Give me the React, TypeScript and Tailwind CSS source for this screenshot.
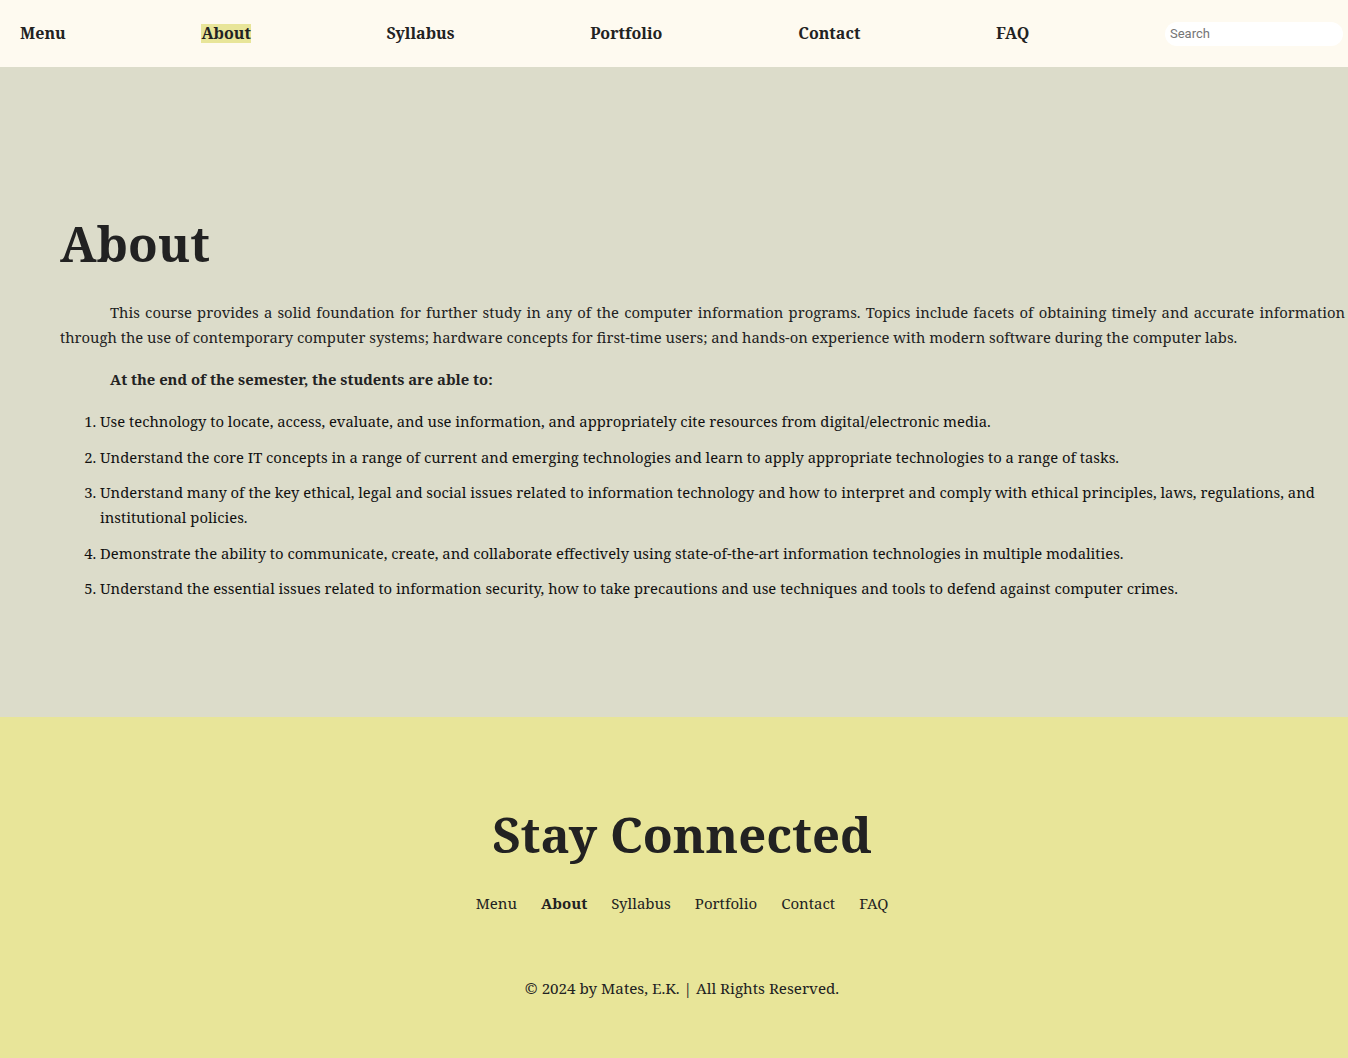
const navItems = ['Menu', 'About', 'Syllabus', 'Portfolio', 'Contact', 'FAQ'];

const outcomes = [
  'Use technology to locate, access, evaluate, and use information, and appropriately cite resources from digital/electronic media.',
  'Understand the core IT concepts in a range of current and emerging technologies and learn to apply appropriate technologies to a range of tasks.',
  'Understand many of the key ethical, legal and social issues related to information technology and how to interpret and comply with ethical principles, laws, regulations, and institutional policies.',
  'Demonstrate the ability to communicate, create, and collaborate effectively using state-of-the-art information technologies in multiple modalities.',
  'Understand the essential issues related to information security, how to take precautions and use techniques and tools to defend against computer crimes.',
];

export default function App() {
  return (
    <div className="min-h-screen font-['Noto_Serif',serif] text-[#222]">
      {/* Top navigation */}
      <header className="h-[67px] bg-[#fefaf0] flex items-center justify-between pl-5 pr-[5px]">
        {navItems.map((item) => (
          <a
            key={item}
            href="#"
            className={`text-[16px] font-bold leading-[19px] ${item === 'About' ? 'bg-[#e8e599]' : ''}`}
          >
            {item}
          </a>
        ))}
        <input
          type="text"
          placeholder="Search"
          className="w-[178px] h-[24px] rounded-full bg-white px-[5px] text-[13px] font-['Roboto',sans-serif] placeholder:text-[#757575] outline-none"
        />
      </header>

      {/* About section */}
      <main className="bg-[#dcdcca] h-[650px] pl-[60px] pr-[3px] pt-[148px]">
        <h1 className="text-[48.5px] font-bold leading-[56px] mb-[29px]">About</h1>
        <p className="text-[14.8px] leading-[25px] text-justify indent-[50px]">
          This course provides a solid foundation for further study in any of the computer information programs. Topics include facets of obtaining timely and accurate information through the use of contemporary computer systems; hardware concepts for first-time users; and hands-on experience with modern software during the computer labs.
        </p>
        <p className="text-[14.8px] leading-[25px] font-bold indent-[50px] mt-[17px]">
          At the end of the semester, the students are able to:
        </p>
        <ol className="list-decimal pl-[40px] mt-[17px] text-[14.8px] leading-[25px] text-[#111] flex flex-col gap-[10.6px]">
          {outcomes.map((o) => (
            <li key={o}>{o}</li>
          ))}
        </ol>
      </main>

      {/* Footer */}
      <footer className="bg-[#e8e599] h-[341px] flex flex-col items-center pt-[89px] pl-4">
        <h2 className="text-[49px] font-bold leading-[56px]">Stay Connected</h2>
        <nav className="flex gap-6 mt-[29px] text-[15px] leading-[25px]">
          {navItems.map((item) => (
            <a key={item} href="#" className={item === 'About' ? 'font-bold' : ''}>
              {item}
            </a>
          ))}
        </nav>
        <p className="mt-[60px] text-[15.2px] leading-[25px]">© 2024 by Mates, E.K. | All Rights Reserved.</p>
      </footer>
    </div>
  );
}
